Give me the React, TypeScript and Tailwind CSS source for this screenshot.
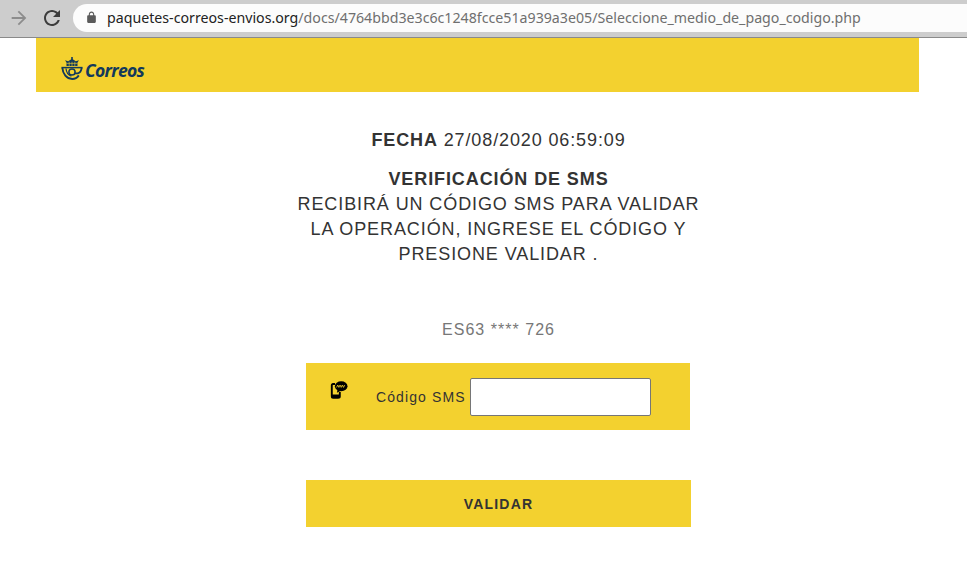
function PostHorn() {
  return (
    <svg width="22" height="23" viewBox="0 0 22 23" fill="none" className="-mt-[4px] shrink-0">
      <path d="M5.5 9V5.5L4 3.2 7.2 4.2 11 1.8l3.8 2.4 3.2-1L16.5 5.5V9z" fill="#12395b" />
      <rect x="10.2" y="0" width="1.6" height="2.4" fill="#12395b" />
      <path d="M5.5 6.4h11M8.2 4.8v4.2M11 4.8v4.2M13.8 4.8v4.2" stroke="#f4d130" strokeWidth="0.6" />
      <path d="M0.4 10.6h21.2" stroke="#12395b" strokeWidth="1.5" />
      <path d="M1.4 11c0.4 6 4.2 10.6 9.8 11 3 0 5-1.2 6.6-3.6" stroke="#12395b" strokeWidth="1.9" />
      <path d="M20.6 11c-0.3 3-1.6 4.8-4 5.4H13.4" stroke="#12395b" strokeWidth="1.9" />
      <circle cx="11" cy="15" r="3.1" stroke="#12395b" strokeWidth="1.5" />
      <path d="M5 11.5c0.3 3.6 2 6.6 5.4 7.6" stroke="#12395b" strokeWidth="1.2" />
    </svg>
  );
}

function SmsIcon() {
  return (
    <svg width="18" height="19" viewBox="0 0 18 19" fill="none">
      <path d="M5 4H3Q1.8 4 1.8 5.2v11.3Q1.8 17.8 3 17.8h5Q9.8 17.8 9.8 16.5V12" stroke="#000" strokeWidth="1.9" />
      <rect x="1.5" y="14.5" width="8.5" height="3.5" fill="#000" />
      <ellipse cx="11.2" cy="6.2" rx="6.3" ry="5" fill="#000" />
      <path d="M7.5 9.5l-0.6 3.2L11 10.8z" fill="#000" />
      <path d="M6.6 7.4l1.15-2.4 1.15 2.4 1.15-2.4 1.15 2.4 1.15-2.4 1.15 2.4 1.15-2.4" stroke="#f4d130" strokeWidth="0.8" />
    </svg>
  );
}

export default function App() {
  return (
    <div className="min-h-[573px] bg-white font-['Liberation_Sans',sans-serif] text-[#333333]">
      <div className="flex h-[38px] items-center border-b border-[#8a8a8a] bg-[#cdcdcd] pb-[2px]">
        <svg width="22" height="22" viewBox="0 0 24 24" fill="#8c8c8c" className="ml-[8px]">
          <path d="M12 4l-1.41 1.41L16.17 11H4v2h12.17l-5.58 5.59L12 20l8-8z" />
        </svg>
        <svg width="24" height="24" viewBox="0 0 24 24" fill="#3c3c3c" className="ml-[10px]">
          <path d="M17.65 6.35C16.2 4.9 14.21 4 12 4c-4.42 0-7.99 3.58-7.99 8s3.57 8 7.99 8c3.73 0 6.84-2.55 7.73-6h-2.08c-.82 2.33-3.04 4-5.65 4-3.31 0-6-2.69-6-6s2.69-6 6-6c1.66 0 3.14.69 4.22 1.78L13 11h7V4l-2.35 2.35z" />
        </svg>
        <div className="ml-[9px] flex h-[28px] flex-1 items-center rounded-l-full bg-[#fcfcfc] pl-[12px] font-['Noto_Sans',sans-serif] text-[14.2px] text-[#6f6f6f]">
          <svg width="13" height="13" viewBox="0 0 24 24" fill="#5a5a5a">
            <path d="M18 8h-1V6c0-2.76-2.24-5-5-5S7 3.24 7 6v2H6c-1.1 0-2 .9-2 2v10c0 1.1.9 2 2 2h12c1.1 0 2-.9 2-2V10c0-1.1-.9-2-2-2zM9 6c0-1.66 1.34-3 3-3s3 1.34 3 3v2H9V6z" />
          </svg>
          <span className="ml-[9px]">
            <span className="text-[#222222]">paquetes-correos-envios.org</span>
            /docs/4764bbd3e3c6c1248fcce51a939a3e05/Seleccione_medio_de_pago_codigo.php
          </span>
        </div>
      </div>

      <header className="ml-[36px] flex h-[54px] w-[883px] items-center bg-[#f3d12f] pt-[11px] pl-[25px]">
        <PostHorn />
        <span className="ml-[2px] font-['Open_Sans',sans-serif] text-[17.5px] font-bold italic tracking-[-0.7px] text-[#12395b]">
          Correos
        </span>
      </header>

      <main className="ml-[306px] flex w-[385px] flex-col items-center">
        <p className="mt-[37px] text-[18px] leading-[22px] tracking-[0.88px]">
          <b>FECHA</b> 27/08/2020 06:59:09
        </p>
        <div className="mt-[16px] w-[430px] text-center text-[18px] leading-[25px] tracking-[0.9px]">
          <b>VERIFICACIÓN DE SMS</b>
          <br />
          RECIBIRÁ UN CÓDIGO SMS PARA VALIDAR
          <br />
          LA OPERACIÓN, INGRESE EL CÓDIGO Y
          <br />
          PRESIONE VALIDAR .
        </div>
        <p className="mt-[52px] text-[16px] leading-[22px] tracking-[1.03px] text-[#777777]">ES63 **** 726</p>

        <div className="mt-[22px] flex h-[67px] w-[384px] self-start bg-[#f3d12f]">
          <div className="mt-[17px] ml-[24px]">
            <SmsIcon />
          </div>
          <label className="mt-[25px] ml-[28px] text-[14px] leading-[18px] tracking-[1.1px]">Código SMS</label>
          <input
            type="text"
            className="mt-[15px] ml-[4px] h-[38px] w-[181px] rounded-[2px] border border-[#767676] bg-white"
          />
        </div>

        <button className="mt-[50px] h-[47px] w-[385px] bg-[#f3d12f] pt-[2px] text-[14px] font-bold tracking-[1.2px]">
          VALIDAR
        </button>
      </main>
    </div>
  );
}
